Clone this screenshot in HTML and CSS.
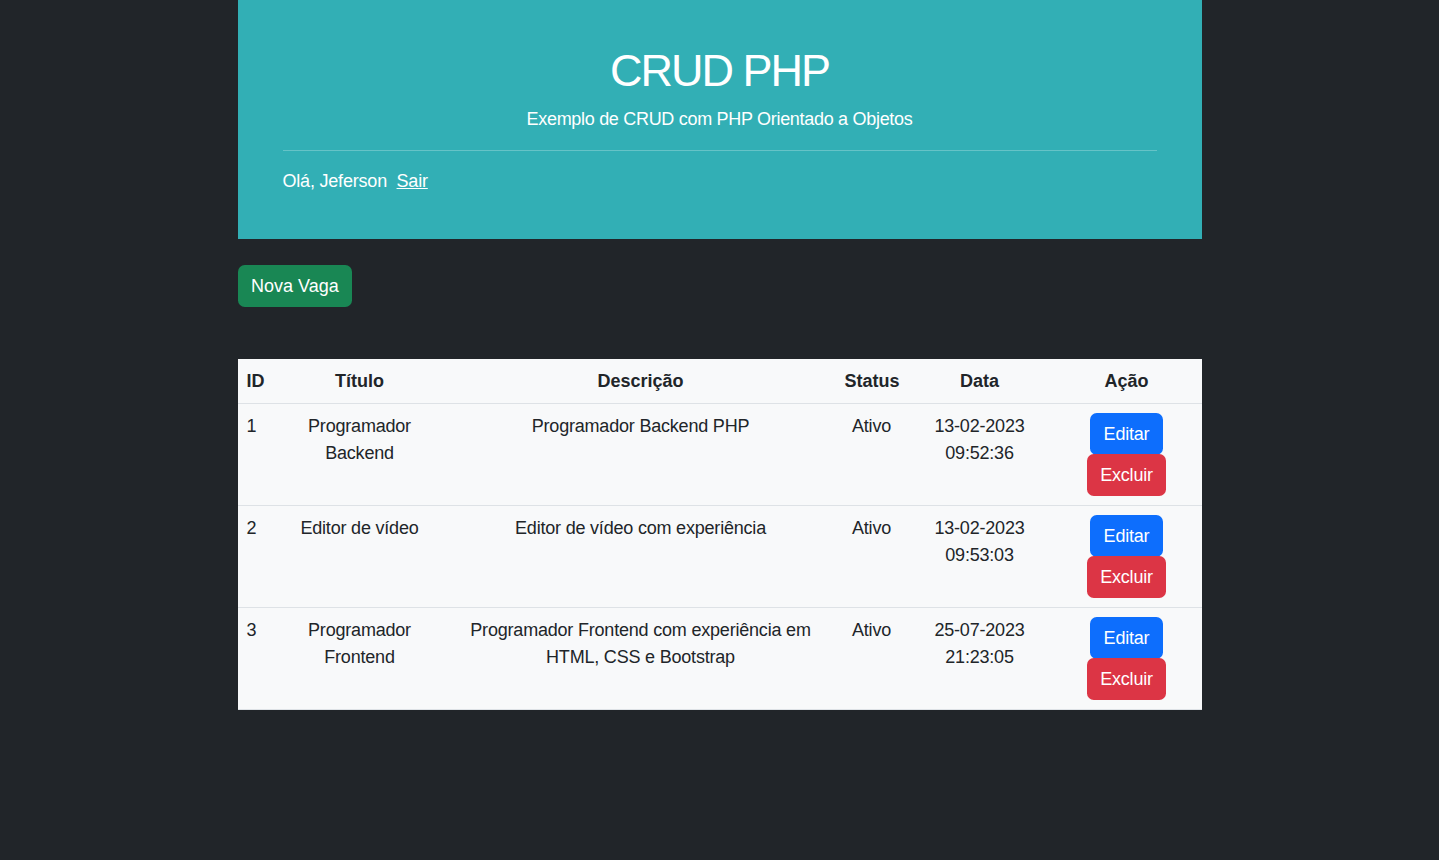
FILE: index.html
```html
<!DOCTYPE html>
<html lang="pt-BR">
<head>
<meta charset="utf-8">
<title>CRUD PHP</title>
<link rel="stylesheet" href="styles.css">
</head>
<body>
<div class="container">
  <header class="hero">
    <h1 class="hero-title">CRUD PHP</h1>
    <p class="hero-sub">Exemplo de CRUD com PHP Orientado a Objetos</p>
    <hr class="hero-rule">
    <p class="hero-user">Olá, Jeferson&nbsp; <a href="#" class="hero-link">Sair</a></p>
  </header>

  <section class="actions">
    <a href="#" class="btn btn-success">Nova Vaga</a>
  </section>

  <section class="list">
    <table class="table">
      <colgroup>
        <col class="c-id"><col class="c-title"><col class="c-desc"><col class="c-status"><col class="c-date"><col class="c-act">
      </colgroup>
      <thead>
        <tr>
          <th class="left">ID</th><th>Título</th><th>Descrição</th><th>Status</th><th>Data</th><th>Ação</th>
        </tr>
      </thead>
      <tbody>
        <tr>
          <td class="left">1</td>
          <td>Programador Backend</td>
          <td>Programador Backend PHP</td>
          <td>Ativo</td>
          <td>13-02-2023 09:52:36</td>
          <td><div class="btns"><a href="#" class="btn btn-primary">Editar</a><a href="#" class="btn btn-danger">Excluir</a></div></td>
        </tr>
        <tr>
          <td class="left">2</td>
          <td>Editor de vídeo</td>
          <td>Editor de vídeo com experiência</td>
          <td>Ativo</td>
          <td>13-02-2023 09:53:03</td>
          <td><div class="btns"><a href="#" class="btn btn-primary">Editar</a><a href="#" class="btn btn-danger">Excluir</a></div></td>
        </tr>
        <tr>
          <td class="left">3</td>
          <td>Programador Frontend</td>
          <td>Programador Frontend com experiência em HTML, CSS e Bootstrap</td>
          <td>Ativo</td>
          <td>25-07-2023 21:23:05</td>
          <td><div class="btns"><a href="#" class="btn btn-primary">Editar</a><a href="#" class="btn btn-danger">Excluir</a></div></td>
        </tr>
      </tbody>
    </table>
  </section>
</div>
</body>
</html>
```
FILE: styles.css
```css
* { box-sizing: border-box; }
html, body { margin: 0; padding: 0; }
body {
  background: #212529;
  color: #212529;
  font-family: "Liberation Sans", Arial, sans-serif;
  font-size: 18px;
  line-height: 27px;
  min-height: 860px;
}
.container {
  width: 964px;
  margin: 0 auto;
}
.hero {
  background: #32afb5;
  color: #fff;
  padding: 44px 45px 26px;
}
.hero-title {
  margin: 0 0 8px;
  font-size: 45px;
  line-height: 54px;
  font-weight: 400;
  letter-spacing: -2px;
  text-align: center;
}
.hero-sub {
  margin: 0;
  text-align: center;
  font-size: 18px;
  line-height: 27px;
  letter-spacing: -0.3px;
}
.hero-rule {
  margin: 17px 0 17px;
  border: 0;
  border-top: 1px solid rgba(255,255,255,0.25);
  height: 0;
}
.hero-user {
  margin: 0 0 18px;
  letter-spacing: -0.2px;
}
.hero-link { color: #fff; text-decoration: underline; }

.actions { padding-top: 26px; }

.btn {
  display: inline-block;
  font-size: 18px;
  line-height: 27px;
  padding: 7.5px 13.5px;
  border-radius: 6.75px;
  color: #fff;
  text-decoration: none;
  text-align: center;
}
.btn-success { background: #198754; }
.btn-primary { background: #0d6efd; }
.btn-danger { background: #dc3545; }

.list { padding-top: 52px; }
.table {
  width: 964px;
  border-collapse: collapse;
  table-layout: fixed;
  background: #f8f9fa;
  text-align: center;
}
.c-id { width: 36px; }
.c-title { width: 172px; }
.c-desc { width: 390px; }
.c-status { width: 72px; }
.c-date { width: 144px; }
.c-act { width: 150px; }
.table th, .table td {
  padding: 9px 9px 8px;
  vertical-align: top;
  border-bottom: 1px solid #dee2e6;
}
.table th { font-weight: 700; }
.table td { padding-bottom: 9px; letter-spacing: -0.2px; }
.table .left { text-align: left; }
.btns {
  display: flex;
  flex-direction: column;
  align-items: center;
}
.btns .btn-danger { margin-top: -1px; }
```
